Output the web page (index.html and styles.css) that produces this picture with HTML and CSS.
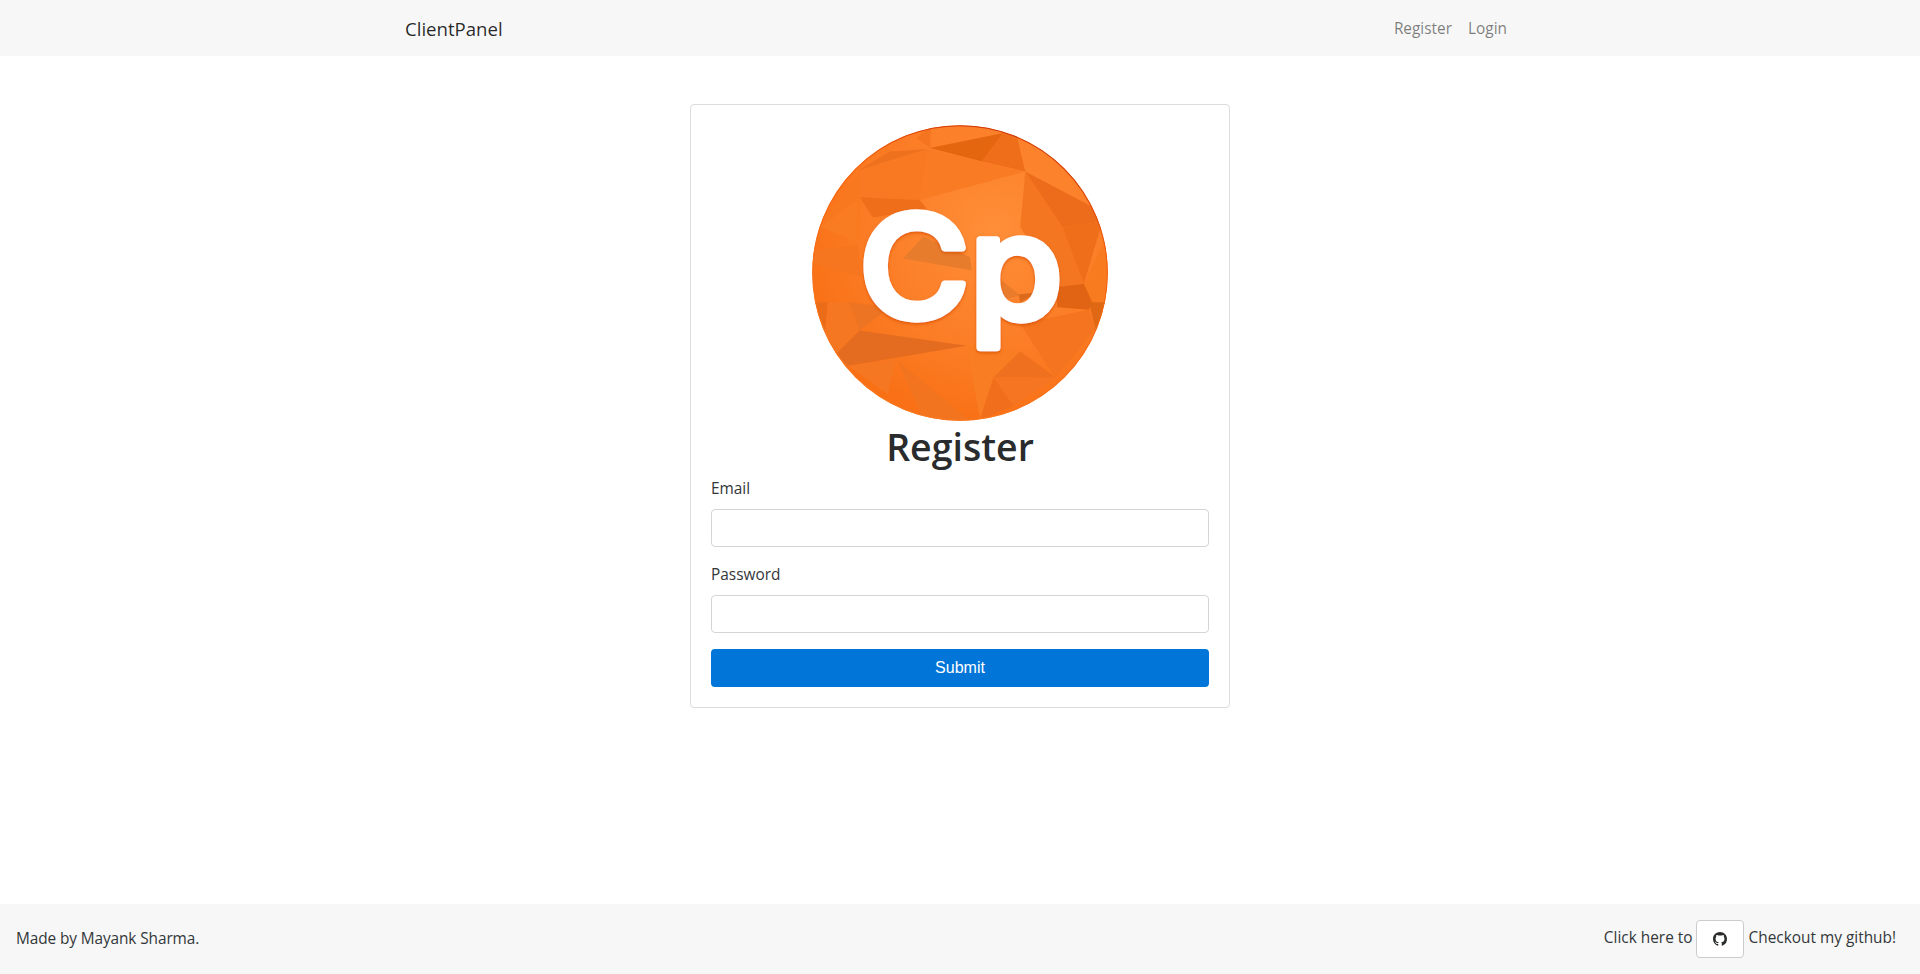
FILE: index.html
```html
<!DOCTYPE html>
<html lang="en">
<head>
  <meta charset="UTF-8">
  <meta name="viewport" content="width=device-width, initial-scale=1.0">
  <title>ClientPanel</title>
  <link rel="stylesheet" href="styles.css">
</head>
<body>
  <nav class="navbar">
    <div class="navbar-inner">
      <a class="brand" href="#">ClientPanel</a>
      <ul class="nav-links">
        <li><a href="#">Register</a></li>
        <li><a href="#">Login</a></li>
      </ul>
    </div>
  </nav>

  <main class="content">
    <div class="card">
      <svg class="logo" viewBox="68 46 884 884" role="img" aria-label="ClientPanel logo">
        <defs>
          <radialGradient id="logoBg" gradientUnits="userSpaceOnUse" cx="610" cy="360" r="600">
            <stop offset="0" stop-color="#ff8e38"/>
            <stop offset="0.6" stop-color="#fb7d26"/>
            <stop offset="1" stop-color="#f96f14"/>
          </radialGradient>
          <linearGradient id="logoRim" x1="0.7" y1="0" x2="0.3" y2="1">
            <stop offset="0" stop-color="#c92f06"/>
            <stop offset="0.3" stop-color="#f4600c"/>
            <stop offset="1" stop-color="#fb7a20"/>
          </linearGradient>
          <clipPath id="logoClip"><circle cx="510" cy="488" r="441"/></clipPath>
          <filter id="logoShadow" x="-10%" y="-10%" width="120%" height="120%">
            <feDropShadow dx="0" dy="5" stdDeviation="4" flood-color="#d94f00" flood-opacity="0.8"/>
          </filter>
        </defs>
        <g clip-path="url(#logoClip)">
          <rect x="68" y="46" width="884" height="884" fill="url(#logoBg)"/>
          <polygon fill="#f4741f" points="380,85 425,50 420,115"/>
          <polygon fill="#fb8029" points="425,50 620,50 420,115"/>
          <polygon fill="#e4660f" points="420,115 640,70 575,155"/>
          <polygon fill="#ee6e1a" points="575,155 640,70 680,80 705,185"/>
          <polygon fill="#ee721e" points="205,182 415,118 300,125"/>
          <polygon fill="#f97c24" points="415,118 705,185 390,270"/>
          <polygon fill="#f87922" points="210,262 210,185 415,118 390,270"/>
          <polygon fill="#ee6e1a" points="210,262 390,270 410,295 250,322"/>
          <polygon fill="#f8781f" points="90,350 210,190 205,400"/>
          <polygon fill="#f5761f" points="70,420 205,405 215,500 70,460"/>
          <polygon fill="#f97b22" points="95,350 205,265 205,400"/>
          <polygon fill="#f47620" points="705,185 815,350 880,520 800,530 690,350"/>
          <polygon fill="#ec6c1c" points="705,185 905,290 935,335 815,350"/>
          <polygon fill="#ee6e1a" points="815,350 935,335 880,520"/>
          <polygon fill="#f97b20" points="880,520 945,385 960,575 905,575"/>
          <polygon fill="#e06414" points="800,530 880,520 905,575 895,598 800,590"/>
          <polygon fill="#de6814" points="895,575 950,575 915,655"/>
          <polygon fill="#f47420" points="795,800 915,655 895,598 690,640"/>
          <polygon fill="#e67c2c" points="340,445 400,380 540,440 545,480"/>
          <polygon fill="#e97c2c" points="615,495 690,555 610,575"/>
          <polygon fill="#dc6a1c" points="685,552 745,545 690,575"/>
          <polygon fill="#ea6c18" points="70,575 115,575 105,690"/>
          <polygon fill="#f67722" points="115,575 180,575 210,660 140,730 105,690"/>
          <polygon fill="#ec7422" points="180,575 300,590 210,660"/>
          <polygon fill="#e36c20" points="210,660 530,705 175,765 140,730"/>
          <polygon fill="#f67722" points="175,765 320,745 295,850"/>
          <polygon fill="#f3741e" points="320,745 540,930 400,925"/>
          <polygon fill="#f97d22" points="530,705 570,925 610,800 690,722"/>
          <polygon fill="#ef701e" points="610,800 690,722 795,800"/>
          <polygon fill="#f57522" points="610,800 795,800 670,885"/>
          <polygon fill="#f06e1c" points="610,800 570,925 670,885"/>
        </g>
        <circle cx="510" cy="488" r="440" fill="none" stroke="url(#logoRim)" stroke-width="3"/>
        <text class="logo-text" transform="translate(208 622) scale(1.06 1)" filter="url(#logoShadow)">Cp</text>
      </svg>

      <h1 class="card-title">Register</h1>

      <form class="form">
        <div class="form-group">
          <label for="email">Email</label>
          <input id="email" type="email">
        </div>
        <div class="form-group">
          <label for="password">Password</label>
          <input id="password" type="password">
        </div>
        <button class="btn-submit" type="button">Submit</button>
      </form>
    </div>
  </main>

  <footer class="footer">
    <span class="footer-left">Made by Mayank Sharma.</span>
    <div class="footer-right">
      <span class="footer-text">Click here to</span>
      <a class="btn-github" href="#" aria-label="GitHub">
        <svg class="github-icon" viewBox="0 0 16 16"><path d="M8 0C3.58 0 0 3.58 0 8c0 3.54 2.29 6.53 5.47 7.59.4.07.55-.17.55-.38 0-.19-.01-.82-.01-1.49-2.01.37-2.53-.49-2.69-.94-.09-.23-.48-.94-.82-1.13-.28-.15-.68-.52-.01-.53.63-.01 1.08.58 1.23.82.72 1.21 1.87.87 2.33.66.07-.52.28-.87.51-1.07-1.78-.2-3.64-.89-3.64-3.95 0-.87.31-1.59.82-2.15-.08-.2-.36-1.02.08-2.12 0 0 .67-.21 2.2.82.64-.18 1.32-.27 2-.27s1.36.09 2 .27c1.53-1.04 2.2-.82 2.2-.82.44 1.1.16 1.92.08 2.12.51.56.82 1.27.82 2.15 0 3.07-1.87 3.75-3.65 3.95.29.25.54.73.54 1.48 0 1.07-.01 1.93-.01 2.2 0 .21.15.46.55.38A8.01 8.01 0 0 0 16 8c0-4.42-3.58-8-8-8z"/></svg>
      </a>
      <span class="footer-text">Checkout my github!</span>
    </div>
  </footer>
</body>
</html>
```

FILE: styles.css
```css
* {
  box-sizing: border-box;
}
html, body {
  height: 100%;
}
body {
  margin: 0;
  display: flex;
  flex-direction: column;
  min-height: 100vh;
  background-color: #fff;
  color: #33373a;
  font-family: "Open Sans", "Noto Sans", sans-serif;
  font-size: 15.4px;
  line-height: 24px;
}
a {
  text-decoration: none;
}

/* navbar */
.navbar {
  height: 56px;
  padding-top: 1px;
  background-color: #f7f7f7;
  flex-shrink: 0;
}
.navbar-inner {
  width: 1140px;
  height: 100%;
  margin: 0 auto;
  padding: 0 15px;
  display: flex;
  align-items: center;
  justify-content: space-between;
}
.brand {
  font-size: 18.6px;
  color: rgba(0, 0, 0, .85);
}
.nav-links {
  display: flex;
  margin: 0;
  padding: 0;
  list-style: none;
}
.nav-links a {
  display: block;
  padding: 0 8px;
  color: rgba(0, 0, 0, .5);
}

/* card */
.content {
  flex: 1;
  padding-top: 48px;
}
.card {
  width: 540px;
  margin: 0 auto;
  padding: 20px;
  border: 1px solid #dcdcdc;
  border-radius: 4px;
}
.logo {
  display: block;
  width: 296px;
  height: 296px;
  margin: 0 auto;
}
.logo-text {
  font-family: Inter, sans-serif;
  font-weight: 500;
  font-size: 425px;
  fill: #fff;
  stroke: #fff;
  stroke-width: 22px;
  stroke-linejoin: round;
}
.card-title {
  margin: 0 0 8px;
  padding-top: 3px;
  color: #292b2c;
  font-size: 37.5px;
  font-weight: 600;
  line-height: 45px;
  text-align: center;
}
.form-group {
  margin-bottom: 16px;
}
.form-group label {
  display: block;
  margin-bottom: 8px;
}
.form-group input {
  display: block;
  width: 100%;
  height: 38px;
  border: 1px solid #d5d5d5;
  border-radius: 4px;
  background-color: #fff;
}
.btn-submit {
  display: block;
  width: 100%;
  height: 38px;
  border: 0;
  border-radius: 4px;
  background-color: #0275d8;
  color: #fff;
  font-family: "Liberation Sans", Arial, sans-serif;
  font-size: 16px;
}

/* footer */
.footer {
  height: 70px;
  flex-shrink: 0;
  padding: 0 24px 0 16px;
  background-color: #f7f7f7;
  display: flex;
  align-items: center;
  justify-content: space-between;
}
.footer-left {
  letter-spacing: -.1px;
}
.footer-right {
  display: flex;
  align-items: center;
}
.footer-text {
  padding-bottom: 3px;
}
.btn-github {
  display: flex;
  align-items: center;
  justify-content: center;
  width: 48px;
  height: 38px;
  margin: 0 5px 0 3px;
  border: 1px solid #ccc;
  border-radius: 4px;
  background-color: #fff;
}
.github-icon {
  width: 14px;
  height: 14px;
  fill: #292b2c;
}
```
